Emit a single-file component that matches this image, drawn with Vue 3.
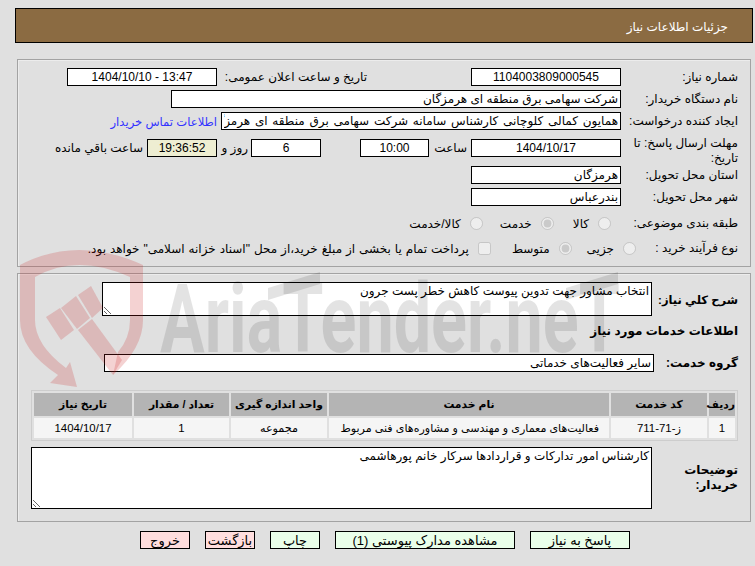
<template>
  <div class="page" dir="rtl">
    <div class="header">جزئیات اطلاعات نیاز</div>

    <div class="panel info">
      <div class="row">
        <label class="lbl">شماره نیاز:</label>
        <input class="box w150 center" readonly value="1104003809000545" />
        <label class="lbl-pub">تاریخ و ساعت اعلان عمومی:</label>
        <input class="box w150 center" readonly value="13:47 - 1404/10/10" />
      </div>
      <div class="row">
        <label class="lbl">نام دستگاه خریدار:</label>
        <input class="box w450" readonly value="شرکت سهامی برق منطقه ای هرمزگان" />
      </div>
      <div class="row">
        <label class="lbl">ایجاد کننده درخواست:</label>
        <input class="box w400 spaced" readonly value="همایون کمالی کلوچانی کارشناس سامانه شرکت سهامی برق منطقه ای هرمزگان" />
        <a class="contact">اطلاعات تماس خریدار</a>
      </div>
      <div class="row deadline">
        <label class="lbl two">مهلت ارسال پاسخ: تا تاریخ:</label>
        <input class="box w150 center" readonly value="1404/10/17" />
        <span class="unit u-hour">ساعت</span>
        <input class="box w69 center" readonly value="10:00" />
        <input class="box w70 center gap-days" readonly value="6" />
        <span class="unit u-days">روز و</span>
        <input class="box w70 center timer" readonly value="19:36:52" />
        <span class="unit u-left">ساعت باقي مانده</span>
      </div>
      <div class="row">
        <label class="lbl">استان محل تحویل:</label>
        <input class="box w150" readonly value="هرمزگان" />
      </div>
      <div class="row">
        <label class="lbl">شهر محل تحویل:</label>
        <input class="box w150" readonly value="بندرعباس" />
      </div>
      <div class="row choice cat">
        <label class="lbl">طبقه بندی موضوعی:</label>
        <span v-for="c in categories" :key="c.text" class="opt">
          <input type="radio" disabled :checked="c.on" />
          <span>{{ c.text }}</span>
        </span>
      </div>
      <div class="row choice proc">
        <label class="lbl">نوع فرآیند خرید :</label>
        <span class="opt"><input type="radio" disabled /><span>جزیی</span></span>
        <span class="opt"><input type="radio" disabled checked /><span>متوسط</span></span>
        <span class="opt pay">
          <input type="checkbox" disabled />
          <span>پرداخت تمام یا بخشی از مبلغ خرید،از محل "اسناد خزانه اسلامی" خواهد بود.</span>
        </span>
      </div>
    </div>

    <div class="panel services">
      <div class="row desc">
        <label class="lbl bold">شرح کلي نیاز:</label>
        <textarea class="box area short" readonly>انتخاب مشاور جهت تدوین پیوست کاهش خطر پست جرون</textarea>
      </div>
      <div class="sub-title">اطلاعات خدمات مورد نیاز</div>
      <div class="row group">
        <label class="lbl bold">گروه خدمت:</label>
        <input class="box w550" readonly value="سایر فعالیت‌های خدماتی" />
      </div>

      <table class="grid">
        <thead>
          <tr>
            <th v-for="col in columns" :key="col.label" :class="col.cls">{{ col.label }}</th>
          </tr>
        </thead>
        <tbody>
          <tr v-for="item in items" :key="item.code">
            <td>{{ item.row }}</td>
            <td>{{ item.code }}</td>
            <td class="name">{{ item.name }}</td>
            <td class="unit-cell">{{ item.unit }}</td>
            <td>{{ item.qty }}</td>
            <td>{{ item.date }}</td>
          </tr>
        </tbody>
      </table>

      <div class="row notes">
        <label class="lbl bold">توضیحات خریدار:</label>
        <textarea class="box area tall" readonly>کارشناس امور تدارکات و قراردادها سرکار خانم پورهاشمی</textarea>
      </div>
    </div>

    <div class="actions">
      <button v-for="b in buttons" :key="b.text" :class="['btn', b.cls]">{{ b.text }}</button>
    </div>

    <!-- watermark lies over the whole form -->
    <svg class="watermark" viewBox="0 0 755 566" aria-hidden="true">
      <g fill="#c81e1e" fill-opacity="0.2">
        <path d="M20 265 Q77 235 143 265 V320 Q143 348 113 375 L118 352 Q130 338 130 320 V277 Q77 253 35 277 V320 Q35 345 66 368 L70 362 L77 387 L50 383 L58 375 Q20 350 20 320 Z" />
        <polygon points="46,317 60,308 74,330 61,340" />
        <polygon points="61,308 76,296 90,318 77,329" />
        <polygon points="78,295 91,286 103,308 92,318" />
        <polygon points="78,330 92,319 122,360 113,375" />
      </g>
      <g fill="#000" fill-opacity="0.11">
        <text x="160" y="352" font-family="Roboto, sans-serif" font-weight="700" font-size="97" textLength="460" lengthAdjust="spacingAndGlyphs" direction="ltr" unicode-bidi="bidi-override">AriaTender.neT</text>
        <polygon points="268,288 320,272 320,284 268,300" />
        <polygon points="566,288 618,272 618,284 566,300" />
      </g>
    </svg>
  </div>
</template>

<script setup>
const categories = [
  { text: 'کالا', on: false },
  { text: 'خدمت', on: true },
  { text: 'کالا/خدمت', on: false }
]

const columns = [
  { label: 'ردیف', cls: 'c-row' },
  { label: 'کد خدمت', cls: 'c-code' },
  { label: 'نام خدمت', cls: 'c-name' },
  { label: 'واحد اندازه گیری', cls: 'c-unit' },
  { label: 'تعداد / مقدار', cls: 'c-qty' },
  { label: 'تاریخ نیاز', cls: 'c-date' }
]

const items = [
  {
    row: 1,
    code: 'ز-71-711',
    name: 'فعالیت‌های معماری و مهندسی و مشاوره‌های فنی مربوط',
    unit: 'مجموعه',
    qty: 1,
    date: '1404/10/17'
  }
]

const buttons = [
  { text: 'پاسخ به نیاز', cls: 'green w100' },
  { text: 'مشاهده مدارک پیوستی (1)', cls: 'green w180' },
  { text: 'چاپ', cls: 'green w50' },
  { text: 'بازگشت', cls: 'red w50' },
  { text: 'خروج', cls: 'red w50' }
]
</script>

<style>
html, body {
  margin: 0;
  background: #e0e0e0;
}
</style>

<style scoped>
.page {
  position: relative;
  width: 755px;
  height: 566px;
  overflow: hidden;
  box-sizing: border-box;
  padding: 8px 2px 0 15px;
  background: #e0e0e0;
  color: #000;
  font: 12px/15px "Liberation Sans", "DejaVu Sans", sans-serif;
}

.header {
  height: 35px;
  line-height: 37px;
  box-sizing: border-box;
  border: 1px solid #000;
  background: #8b6b42;
  color: #fff;
  padding-right: 24px;
}

.panel {
  margin: 0 2px 0 2px;
  box-sizing: border-box;
  border: 1px solid #a3a3a3;
  box-shadow: inset 1px 1px 0 #ececec;
  padding-right: 12px;
}

.info {
  margin-top: 16px;
  height: 208px;
  padding-top: 8px;
  display: flex;
  flex-direction: column;
  gap: 4px;
}

.services {
  margin-top: 6px;
  height: 249px;
  padding-top: 8px;
}

.row {
  display: flex;
  align-items: center;
}

.lbl {
  width: 117px;
  flex: none;
}

.lbl-pub {
  width: 150px;
  margin-right: 104px;
  flex: none;
  padding-left: 5px;
  box-sizing: border-box;
}

.box {
  height: 18px;
  box-sizing: border-box;
  border: 1px solid #000;
  border-radius: 0;
  outline: none;
  background: #fff;
  padding: 0 2px;
  margin: 0;
  flex: none;
  color: #000;
  font: inherit;
}

.center { text-align: center; }
.spaced { word-spacing: 1.4px; }
.w69 { width: 69px; }
.w70 { width: 70px; }
.w150 { width: 150px; }
.w400 { width: 400px; }
.w450 { width: 450px; }
.w550 { width: 550px; }

.contact {
  margin-right: 4px;
  color: #3333ff;
  font-size: 11.6px;
  white-space: nowrap;
}

.deadline {
  height: 28px;
  padding-top: 5px;
  box-sizing: border-box;
  align-items: flex-start;
}

.two {
  margin-top: -3px;
}

.unit {
  white-space: nowrap;
  line-height: 18px;
}

.u-hour { margin: 0 4px 0 4px; width: 34px; }
.gap-days { margin-right: 39px; }
.u-days { margin: 0 3px 0 4px; width: 27px; }
.u-left { margin-right: 4px; }
.timer { background: #eeeed2; }

.choice {
  height: 18px;
}

.cat { margin-top: 4px; }
.proc { margin-top: 3px; }

.opt {
  display: inline-flex;
  align-items: center;
  white-space: nowrap;
}

.opt input {
  margin: 0;
  width: 13px;
  height: 13px;
}

.opt span {
  margin-right: 9px;
  padding-top: 2px;
}

.cat .opt { margin-right: 10px; }
.cat .opt + .opt { margin-right: 19px; }
.cat .opt + .opt + .opt { margin-right: 17px; }

.proc .lbl { width: 102px; }
.proc .opt + .opt { margin-right: 15px; }
.proc .opt + .opt + .opt { margin-right: 21px; word-spacing: 0.6px; }

.desc {
  align-items: flex-start;
}

.desc .lbl {
  width: 86px;
  padding-top: 11px;
  font-size: 11.5px;
  white-space: nowrap;
}

.bold {
  font-weight: 700;
}

.area {
  display: block;
  width: 550px;
  resize: both;
  overflow: hidden;
  padding-top: 1px;
}

.short { height: 34px; }
.tall { height: 62px; }

.sub-title {
  margin-top: 8px;
  font-weight: 700;
  height: 15px;
}

.group {
  margin-top: 15px;
}

.group .lbl { width: 84px; }

.grid {
  margin: 18px 0 0 0;
  width: 707px;
  table-layout: fixed;
  border-collapse: separate;
  border-spacing: 2px;
  border: 1px solid #cdcdcd;
}

.grid th {
  height: 23px;
  padding: 0;
  background: #b4b4b4;
  font-size: 10.8px;
  font-weight: 700;
  white-space: nowrap;
}

.grid td {
  height: 20px;
  padding: 0;
  background: #f5f5f5;
  font-size: 11.4px;
  text-align: center;
  white-space: nowrap;
}

.grid td.name {
  font-size: 11.1px;
  text-align: right;
  padding-right: 10px;
}

.grid td.unit-cell {
  font-size: 11.2px;
}

.c-row { width: 26px; }
.c-code { width: 96px; }
.c-name { width: 280px; }
.c-unit { width: 96px; }
.c-qty { width: 95px; }
.c-date { width: 98px; }

.notes {
  margin-top: 6px;
}

.notes .lbl {
  width: 86px;
  padding-left: 20px;
  box-sizing: border-box;
}

.notes .area {
  width: 621px;
}

.actions {
  display: flex;
  justify-content: center;
  gap: 15px;
  margin-top: 9px;
  padding-left: 2px;
}

.btn {
  height: 18px;
  box-sizing: border-box;
  border: 1px solid #000;
  padding: 0;
  color: #000;
  font: inherit;
  font-size: 13px;
}

.green { background: #eaffea; }
.red { background: #ffdede; }
.w50 { width: 50px; }
.w100 { width: 100px; }
.w180 { width: 180px; }

.watermark {
  position: absolute;
  left: 0;
  top: 0;
  width: 755px;
  height: 566px;
  pointer-events: none;
}
</style>
